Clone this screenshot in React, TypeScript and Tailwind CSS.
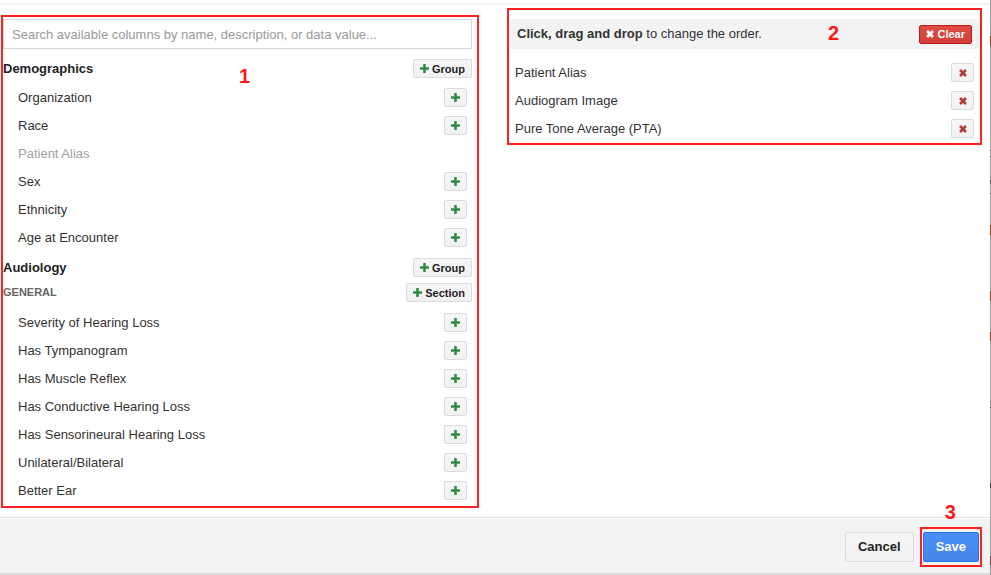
import React from "react";

const demographics = ["Organization", "Race", "Patient Alias", "Sex", "Ethnicity", "Age at Encounter"];
const general = [
  "Severity of Hearing Loss",
  "Has Tympanogram",
  "Has Muscle Reflex",
  "Has Conductive Hearing Loss",
  "Has Sensorineural Hearing Loss",
  "Unilateral/Bilateral",
  "Better Ear",
];
const selected = ["Patient Alias", "Audiogram Image", "Pure Tone Average (PTA)"];

function PlusIcon() {
  return (
    <svg className="h-[9px] w-[9px] shrink-0 fill-[#2e8b45]" viewBox="0 0 9 9" aria-hidden="true">
      <path d="M3.6 0h1.8q.4 0 .4.4v2.8h2.8q.4 0 .4.4v1.8q0 .4-.4.4H5.8v2.8q0 .4-.4.4H3.6q-.4 0-.4-.4V5.8H.4Q0 5.8 0 5.4V3.600q0-.4.4-.4h2.800V.4q0-.4.4-.4z" />
    </svg>
  );
}

function CrossIcon() {
  return (
    <svg className="h-2 w-2 shrink-0 fill-current" viewBox="0 0 8 8" aria-hidden="true">
      <path d="M2 .1 4 2.100 6 .1 7.900 2 5.900 4l2 2L6 7.900l-2-2-2 2L.1 6l2-2-2-2z" />
    </svg>
  );
}

const smallButton =
  "flex h-[19px] shrink-0 items-center justify-center rounded-[2px] border border-[#dcdcdc] bg-linear-to-b from-[#f6f6f6] to-[#f1f1f1]";

function AddButton({ label }: { label: string }) {
  return (
    <button type="button" aria-label={`Add ${label}`} className={`${smallButton} w-[23px]`}>
      <PlusIcon />
    </button>
  );
}

function AddAllButton({ children }: { children: string }) {
  return (
    <button type="button" className={`${smallButton} gap-[3px] px-[6px] text-[11px] leading-4 font-bold text-[#222]`}>
      <PlusIcon />
      {children}
    </button>
  );
}

function ColumnList({ items }: { items: string[] }) {
  return (
    <ul className="pr-[5px] pl-[15px]">
      {items.map((item) => {
        const used = selected.includes(item);
        return (
          <li key={item} className="flex items-start justify-between pt-[5px] pb-1">
            <span className={used ? "leading-[19px] text-[#a0a0a0]" : "leading-[19px]"}>{item}</span>
            {!used && <AddButton label={item} />}
          </li>
        );
      })}
    </ul>
  );
}

function Marker({ className, children }: { className: string; children: string }) {
  return <span className={`absolute text-xl leading-5 font-bold text-[#ff1a1a] ${className}`}>{children}</span>;
}

const edge: [string, string][] = [
  ["h-9", "bg-[#9a9a9a]"],
  ["h-[10px]", "bg-[#8a3f1c]"],
  ["h-[104px]", "bg-[#a3a3a3]"],
  ["h-px", "bg-[#666]"],
  ["h-[5px]", "bg-[#a3a3a3]"],
  ["h-px", "bg-[#666]"],
  ["h-[23px]", "bg-[#a3a3a3]"],
  ["h-1", "bg-[#555]"],
  ["h-[9px]", "bg-[#a3a3a3]"],
  ["h-px", "bg-[#666]"],
  ["h-[31px]", "bg-[#a3a3a3]"],
  ["h-[10px]", "bg-[#8a3f1c]"],
  ["h-14", "bg-[#a3a3a3]"],
  ["h-[10px]", "bg-[#7b4431]"],
  ["h-[31px]", "bg-[#a3a3a3]"],
  ["h-[9px]", "bg-[#7b4431]"],
  ["h-[66px]", "bg-[#a0a0a0]"],
  ["h-px", "bg-[#444]"],
  ["h-[75px]", "bg-[#a0a0a0]"],
  ["h-[5px]", "bg-[#4a3538]"],
  ["h-[68px]", "bg-[#a0a0a0]"],
  ["h-[9px]", "bg-[#7a3d3d]"],
  ["flex-1", "bg-[#a0a0a0]"],
];

export default function App() {
  return (
    <div className="flex min-h-screen bg-white font-['Liberation_Sans',Arial,sans-serif] text-[13px] text-[#333]">
      <div className="flex min-w-0 flex-1 flex-col">
        <div className="h-[5px] border-b-2 border-[#f1f1f1]" />
        <main className="grid flex-1 grid-cols-[478fr_475fr] items-start gap-7 pt-[3px] pr-2 pb-2 pl-px">
          <section aria-label="Available columns" className="relative mt-[7px] border-2 border-[#ff2020] pt-0.5 pr-[5px] pb-0.5">
            <input
              type="text"
              aria-label="Search available columns"
              placeholder="Search available columns by name, description, or data value..."
              className="block h-[30px] w-full border border-[#d6d6d6] bg-white px-2 outline-none placeholder:text-[#999]"
            />
            <div className="mt-[5px] flex items-center justify-between py-[5px]">
              <h2 className="leading-[19px] font-bold text-[#222]">Demographics</h2>
              <AddAllButton>Group</AddAllButton>
            </div>
            <ColumnList items={demographics} />
            <div className="mt-0.5 flex items-center justify-between py-[5px]">
              <h2 className="leading-[19px] font-bold text-[#222]">Audiology</h2>
              <AddAllButton>Group</AddAllButton>
            </div>
            <div className="flex items-center justify-between pb-[5px]">
              <h3 className="text-[11px] leading-[21px] font-bold text-[#666]">GENERAL</h3>
              <AddAllButton>Section</AddAllButton>
            </div>
            <ColumnList items={general} />
            <Marker className="top-[49px] left-[236px]">1</Marker>
          </section>

          <section aria-label="Selected columns" className="relative border-2 border-[#ff2020] pt-[9px] pr-px pb-px pl-px">
            <div className="flex h-[30px] items-center justify-between rounded-[2px] bg-[#f3f3f3] px-[7px]">
              <p>
                <b>Click, drag and drop</b> to change the order.
              </p>
              <button
                type="button"
                className="flex h-[19px] items-center gap-[3px] rounded-[2px] border border-[#b91d1d] bg-linear-to-b from-[#dd4b42] to-[#d23f37] px-[6px] text-[11px] leading-4 font-bold text-white"
              >
                <CrossIcon />
                Clear
              </button>
            </div>
            <ul className="mt-[9px] px-[5px]">
              {selected.map((item) => (
                <li key={item} className="flex items-start justify-between pt-[5px] pb-1">
                  <span className="leading-[19px]">{item}</span>
                  <button type="button" aria-label={`Remove ${item}`} className={`${smallButton} w-[23px] text-[#b53a3a]`}>
                    <CrossIcon />
                  </button>
                </li>
              ))}
            </ul>
            <Marker className="top-[13px] left-[319px]">2</Marker>
          </section>
        </main>

        <footer className="border-t border-[#e2e2e2] pt-px">
          <div className="flex items-center justify-end gap-[6px] border-b-2 border-[#dcdcdc] bg-[#f3f3f3] pt-2 pr-2 pb-[6px]">
            <button
              type="button"
              className="h-[30px] rounded-[2px] border border-[#dcdcdc] bg-linear-to-b from-[#f6f6f6] to-[#f1f1f1] px-3 font-bold text-[#222]"
            >
              Cancel
            </button>
            <div className="relative border-2 border-[#ff2020] px-px py-[3px]">
              <button
                type="button"
                className="block h-[30px] rounded-[2px] border border-[#2574ea] bg-linear-to-b from-[#4b90f7] to-[#4485ea] px-3 font-bold text-white"
              >
                Save
              </button>
              <Marker className="-top-[27px] left-[23px]">3</Marker>
            </div>
          </div>
        </footer>
      </div>
      <div className="flex w-px flex-col" aria-hidden="true">
        {edge.map(([height, color], i) => (
          <div key={i} className={`${height} ${color}`} />
        ))}
      </div>
    </div>
  );
}
